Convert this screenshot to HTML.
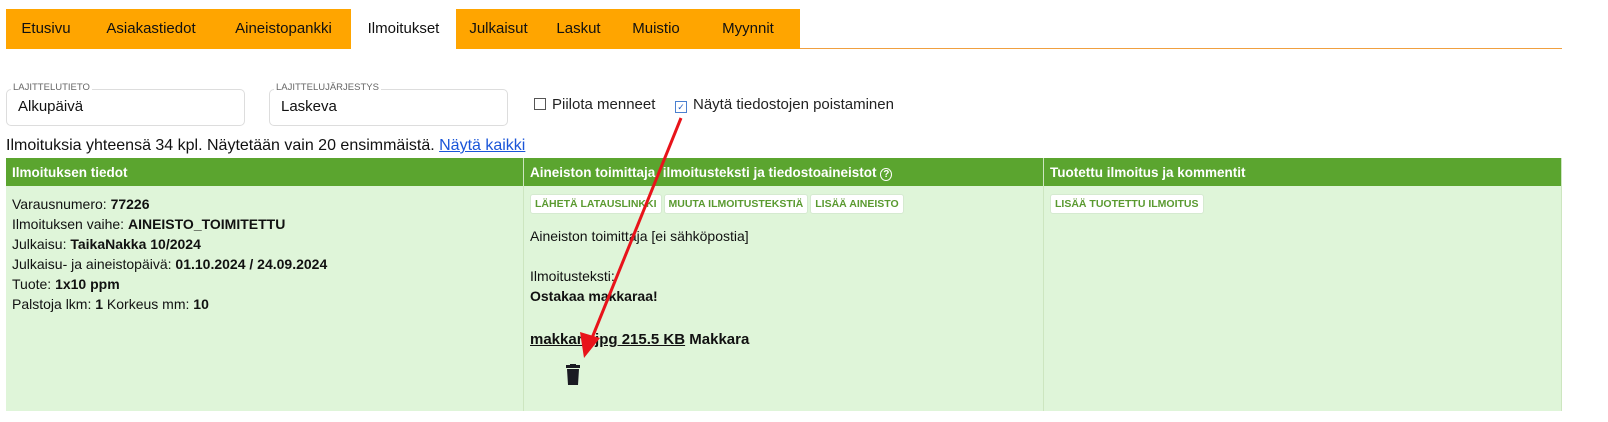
<!DOCTYPE html><html><head><meta charset="utf-8"><style>
body{margin:0;width:1608px;height:422px;background:#fff;font-family:"Liberation Sans",sans-serif;position:relative;overflow:hidden;color:#111}
.tabs{position:absolute;left:6px;top:9px;height:40px;width:1556px;border-bottom:1px solid #f0a040;box-sizing:border-box}
.tab{position:absolute;top:0;height:40px;background:#ffa500;font-size:15px;line-height:40px;text-align:center}
.field{position:absolute;top:89px;height:37px;border:1px solid #ddd;border-radius:5px;box-sizing:border-box;font-size:15px;padding:8px 0 0 11px}
.field span{position:absolute;top:-8px;left:4px;background:#fff;padding:0 2px;font-size:9.5px;color:#666}
.cb{position:absolute;top:96px;font-size:15px;color:#222}
.box{display:inline-block;width:10px;height:10px;border:1px solid #555;vertical-align:-1px;margin-right:6px}
table{position:absolute;left:6px;top:158px;border-collapse:collapse;width:1556px}
th{background:#5ba52f;color:#fff;text-align:left;font-size:13.5px;height:28px;padding:0 6px;border-right:1px solid #cde6c0}
td{background:#dff5d9;vertical-align:top;height:225px;font-size:14px;padding:0 6px;border-right:1px solid #cde6c0}
.btn{display:inline-block;background:#fff;border:1px solid #d5ead0;border-radius:3px;color:#5a9a30;font-size:10.5px;font-weight:bold;padding:3px 4px;margin:8px 2px 0 0}
</style></head><body>
<div class="tabs">
<div class="tab" style="left:0;width:80px">Etusivu</div>
<div class="tab" style="left:80px;width:130px">Asiakastiedot</div>
<div class="tab" style="left:210px;width:135px">Aineistopankki</div>
<div class="tab" style="left:345px;width:105px;background:#fff;height:41px">Ilmoitukset</div>
<div class="tab" style="left:450px;width:85px">Julkaisut</div>
<div class="tab" style="left:535px;width:75px">Laskut</div>
<div class="tab" style="left:610px;width:80px">Muistio</div>
<div class="tab" style="left:690px;width:104px">Myynnit</div>
</div>
<div class="field" style="left:6px;width:239px"><span>LAJITTELUTIETO</span>Alkupäivä</div>
<div class="field" style="left:269px;width:239px"><span>LAJITTELUJÄRJESTYS</span>Laskeva</div>
<div class="cb" style="left:534px"><span class="box"></span>Piilota menneet</div>
<div class="cb" style="left:675px"><span class="box" style="border-color:#4a80d0;font-size:9px;line-height:10px;text-align:center;color:#2a60c0">✓</span>Näytä tiedostojen poistaminen</div>
<div style="position:absolute;left:6px;top:137px;font-size:16px">Ilmoituksia yhteensä 34 kpl. Näytetään vain 20 ensimmäistä. <span style="color:#1a55d8;text-decoration:underline">Näytä kaikki</span></div>
<table><tr><th style="width:505px">Ilmoituksen tiedot</th><th style="width:507px">Aineiston toimittaja, ilmoitusteksti ja tiedostoaineistot <span style="font-size:10px;border:1px solid #fff;border-radius:50%;padding:0 2px">?</span></th><th>Tuotettu ilmoitus ja kommentit</th></tr>
<tr><td style="line-height:20px;padding-top:8px;height:217px">Varausnumero: <b>77226</b><br>Ilmoituksen vaihe: <b>AINEISTO_TOIMITETTU</b><br>Julkaisu: <b>TaikaNakka 10/2024</b><br>Julkaisu- ja aineistopäivä: <b>01.10.2024 / 24.09.2024</b><br>Tuote: <b>1x10 ppm</b><br>Palstoja lkm: <b>1</b> Korkeus mm: <b>10</b></td>
<td><span class="btn">LÄHETÄ LATAUSLINKKI</span><span class="btn">MUUTA ILMOITUSTEKSTIÄ</span><span class="btn">LISÄÄ AINEISTO</span>
<div style="margin-top:12px;line-height:20px">Aineiston toimittaja [ei sähköpostia]<br><br>Ilmoitusteksti:<br><b>Ostakaa makkaraa!</b><br><br><b style="font-size:15px;line-height:28px"><u>makkara.jpg 215.5 KB</u> Makkara</b></div>
<svg width="18" height="22" style="margin:10px 0 0 34px" viewBox="0 0 18 22"><rect x="2" y="1" width="14" height="3" fill="#1a1a22"/><rect x="6" y="0" width="6" height="2" fill="#1a1a22"/><path d="M3 5H15L14 21H4Z" fill="#1a1a22"/></svg></td>
<td><span class="btn">LISÄÄ TUOTETTU ILMOITUS</span></td></tr></table>
<svg style="position:absolute;left:0;top:0" width="1608" height="422"><line x1="681" y1="118" x2="592" y2="338" stroke="#e8131a" stroke-width="3"/><path d="M584 358L580 332L600 338Z" fill="#e8131a"/></svg>
</body></html>
